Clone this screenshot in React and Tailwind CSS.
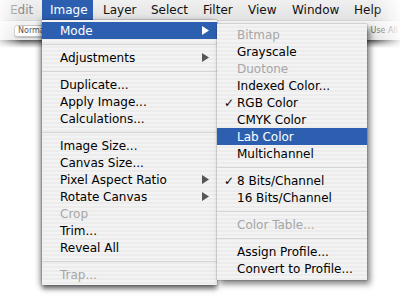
import React from 'react';

const imageItems = [
  { label: 'Mode', sub: true, active: true },
  'sep',
  { label: 'Adjustments', sub: true },
  'sep',
  { label: 'Duplicate...' },
  { label: 'Apply Image...' },
  { label: 'Calculations...' },
  'sep',
  { label: 'Image Size...' },
  { label: 'Canvas Size...' },
  { label: 'Pixel Aspect Ratio', sub: true },
  { label: 'Rotate Canvas', sub: true },
  { label: 'Crop', disabled: true },
  { label: 'Trim...' },
  { label: 'Reveal All' },
  'sep',
  { label: 'Trap...', disabled: true },
];

const modeItems = [
  { label: 'Bitmap', disabled: true },
  { label: 'Grayscale' },
  { label: 'Duotone', disabled: true },
  { label: 'Indexed Color...' },
  { label: 'RGB Color', checked: true },
  { label: 'CMYK Color' },
  { label: 'Lab Color', active: true },
  { label: 'Multichannel' },
  'sep',
  { label: '8 Bits/Channel', checked: true },
  { label: '16 Bits/Channel' },
  'sep',
  { label: 'Color Table...', disabled: true },
  'sep',
  { label: 'Assign Profile...' },
  { label: 'Convert to Profile...' },
];

const menuBar = [
  { label: 'Edit', cls: 'w-[42px] pl-[10px] text-[#8a8a8a]' },
  { label: 'Image', cls: 'w-[51px] pl-[8px] bg-[#2d5fb0] text-white' },
  { label: 'Layer', cls: 'w-[48px] pl-[10px]' },
  { label: 'Select', cls: 'w-[52px] pl-[10px]' },
  { label: 'Filter', cls: 'w-[45px] pl-[10px]' },
  { label: 'View', cls: 'w-[44px] pl-[10px]' },
  { label: 'Window', cls: 'w-[62px] pl-[10px]' },
  { label: 'Help', cls: 'w-[56px] pl-[10px]' },
];

function Arrow({ light }) {
  return (
    <svg width="7" height="9" viewBox="0 0 7 9" className="ml-auto shrink-0">
      <polygon points="0,0 7,4.5 0,9" fill={light ? '#ffffff' : '#555555'} />
    </svg>
  );
}

function Separator() {
  return (
    <div className="h-[10px] flex items-center">
      <div className="w-full h-px bg-[#d5d5d5]" />
    </div>
  );
}

function ImageMenu() {
  return (
    <div className="absolute left-[42px] top-[20px] w-[175px] pt-[2px] pb-[2px] bg-[#f1f1f1] bg-[image:repeating-linear-gradient(180deg,#f3f3f3_0px,#f3f3f3_2px,#ececec_2px,#ececec_4px)] shadow-[0_4px_5px_rgba(0,0,0,0.55),-3px_0_6px_rgba(0,0,0,0.2),0_0_1px_rgba(0,0,0,0.6)]">
      {imageItems.map((it, i) =>
        it === 'sep' ? (
          <Separator key={i} />
        ) : (
          <div
            key={i}
            className={`h-[17px] flex items-center pl-[18px] pr-[8px] ${
              it.active ? 'bg-[#2d5fb0] text-white' : it.disabled ? 'text-[#a6a6a6]' : 'text-black'
            }`}
          >
            <span>{it.label}</span>
            {it.sub && <Arrow light={it.active} />}
          </div>
        )
      )}
    </div>
  );
}

function ModeMenu() {
  return (
    <div className="absolute left-[217px] top-[24px] w-[150px] pt-[2px] pb-[3px] bg-[#f1f1f1] bg-[image:repeating-linear-gradient(180deg,#f3f3f3_0px,#f3f3f3_2px,#ececec_2px,#ececec_4px)] shadow-[3px_4px_6px_rgba(0,0,0,0.5),0_0_1px_rgba(0,0,0,0.6)]">
      {modeItems.map((it, i) =>
        it === 'sep' ? (
          <Separator key={i} />
        ) : (
          <div
            key={i}
            className={`h-[17px] flex items-center pl-[7px] ${
              it.active ? 'bg-[#2d5fb0] text-white' : it.disabled ? 'text-[#a6a6a6]' : 'text-black'
            }`}
          >
            <span className="w-[13px] text-[12px]">{it.checked ? '✓' : ''}</span>
            <span>{it.label}</span>
          </div>
        )
      )}
    </div>
  );
}

export default function App() {
  return (
    <div className="relative w-[400px] h-[297px] overflow-hidden bg-white font-['DejaVu_Sans',sans-serif] text-[12px] leading-none">
      <div className="h-[20px] flex bg-gradient-to-b from-[#f0f0f0] to-[#e2e2e2] text-[#111]">
        {menuBar.map((m) => (
          <div key={m.label} className={`h-full flex items-center shrink-0 ${m.cls}`}>
            {m.label}
          </div>
        ))}
      </div>
      <div className="h-[20px] flex items-center justify-between bg-gradient-to-b from-[#f4f4f4] to-[#e4e4e4] border-t border-[#d6d6d6] text-[8px] text-[#555]">
        <div className="ml-[14px] w-[32px] h-[12px] rounded-[3px] bg-white border border-[#c4c4c4] flex items-center pl-[3px] shadow-[0_1px_1px_rgba(0,0,0,0.2)]">
          Norma
        </div>
        <div className="mr-[2px] text-[#666]">Use All</div>
      </div>
      <div className="h-[8px] bg-gradient-to-b from-[#5a5a5a] via-[#b8b8b8] to-white" />

      <ImageMenu />
      <ModeMenu />

      <div className="pointer-events-none absolute left-0 top-0 w-[22px] h-[48px] bg-gradient-to-r from-white/80 to-transparent" />
      <div className="pointer-events-none absolute right-0 top-0 w-[26px] h-[48px] bg-gradient-to-l from-white/90 to-transparent" />
    </div>
  );
}
